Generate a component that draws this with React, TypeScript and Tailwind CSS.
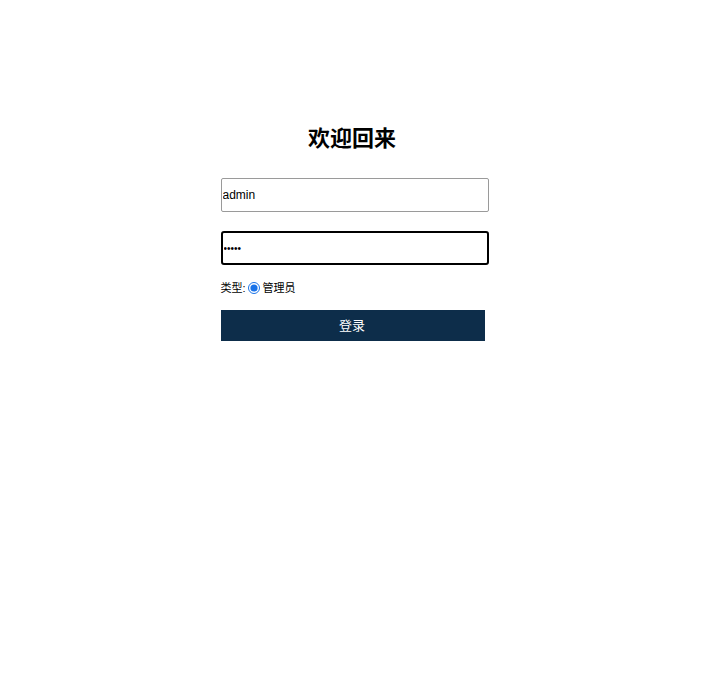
import React, { useState } from "react";

const cjk = { fontFamily: '"Liberation Sans", "Noto Sans CJK SC", sans-serif' };

const App: React.FC = () => {
  const [user, setUser] = useState("admin");
  const [pwd, setPwd] = useState("12345");

  return (
    <div className="min-h-[698px] bg-white text-black" style={cjk}>
      <div className="mx-auto flex w-[268px] flex-col pt-[125px]">
        <h1 className="mb-[26px] pr-[5px] text-center text-[22px] font-bold leading-[27px]">欢迎回来</h1>

        <input
          type="text"
          value={user}
          onChange={(e) => setUser(e.target.value)}
          className="h-[34px] w-full rounded-[2px] border border-[#9a9a9a] px-[1px] text-[12px] outline-none"
        />

        {/* focused state drawn as a static 2px black border */}
        <input
          type="password"
          value={pwd}
          onChange={(e) => setPwd(e.target.value)}
          className="mt-[19px] h-[34px] w-full rounded-[3px] border-2 border-black px-[1px] text-[10px] caret-black outline-none"
        />

        <div className="mt-[16px] flex h-[14px] items-center text-[11px] leading-[14px]">
          <span>类型:</span>
          <label className="ml-[2px] flex items-center gap-[3px]">
            <input type="radio" name="role" defaultChecked className="m-0 h-[12px] w-[12px] accent-[#1a73e8]" />
            <span>管理员</span>
          </label>
        </div>

        <button className="mt-[15px] h-[31px] w-[264px] bg-[#0d2d4a] pr-[1px] text-[13px] text-white">登录</button>
      </div>
    </div>
  );
};

export default App;
